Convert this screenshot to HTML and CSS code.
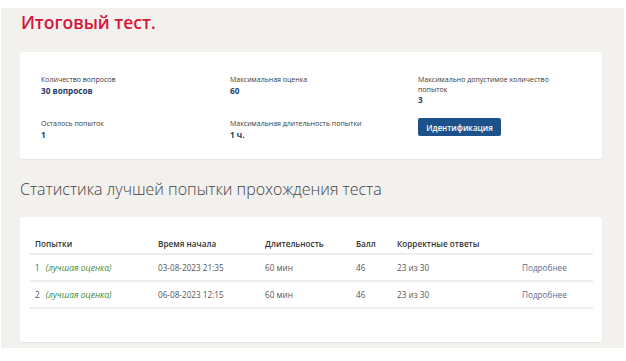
FILE: index.html
```html
<!DOCTYPE html>
<html lang="ru">
<head>
<meta charset="utf-8">
<link rel="stylesheet" href="styles.css">
</head>
<body>
<div class="page">
  <h1 class="title">Итоговый тест.</h1>
  <section class="card info">
    <div class="info-grid">
      <div class="item"><div class="label">Количество вопросов</div><div class="value">30 вопросов</div></div>
      <div class="item"><div class="label">Максимальная оценка</div><div class="value">60</div></div>
      <div class="item"><div class="label">Максимально допустимое количество попыток</div><div class="value">3</div></div>
      <div class="item"><div class="label">Осталось попыток</div><div class="value">1</div></div>
      <div class="item"><div class="label">Максимальная длительность попытки</div><div class="value">1 ч.</div></div>
      <div class="item"><button class="btn">Идентификация</button></div>
    </div>
  </section>
  <h2 class="subtitle">Статистика лучшей попытки прохождения теста</h2>
  <section class="card stats">
    <table class="tbl">
      <thead>
        <tr><th class="c1">Попытки</th><th class="c2">Время начала</th><th class="c3">Длительность</th><th class="c4">Балл</th><th class="c5">Корректные ответы</th><th class="c6"></th></tr>
      </thead>
      <tbody>
        <tr><td class="c1">1 <span class="best">(лучшая оценка)</span></td><td>03-08-2023 21:35</td><td>60 мин</td><td>46</td><td>23 из 30</td><td><a class="more" href="#">Подробнее</a></td></tr>
        <tr><td class="c1">2 <span class="best">(лучшая оценка)</span></td><td>06-08-2023 12:15</td><td>60 мин</td><td>46</td><td>23 из 30</td><td><a class="more" href="#">Подробнее</a></td></tr>
      </tbody>
    </table>
  </section>
</div>
</body>
</html>
```
FILE: styles.css
```css
html, body { margin: 0; padding: 0; background: #fff; }
body { padding: 8px 2px 13px 1px; font-family: "Open Sans", "Noto Sans", sans-serif; color: #333; }
.page {
  background: #f2f1ee;
  height: 340px;
  padding: 0 22px 0 19px;
  box-sizing: border-box;
  overflow: hidden;
}
.title {
  margin: 0;
  height: 44px;
  box-sizing: border-box;
  padding: 3px 0 0 1px;
  font-size: 17.5px;
  font-weight: 600;
  color: #d4163c;
  line-height: 22px;
}
.card {
  background: #fff;
  border-radius: 3px;
  box-shadow: 0 1px 1px rgba(0,0,0,0.05);
}
.info { height: 107px; box-sizing: border-box; padding: 23px 0 0 21px; }
.info-grid {
  display: grid;
  grid-template-columns: 189px 188px 150px;
  grid-template-rows: 44px auto;
}
.label { font-size: 7px; line-height: 9.5px; color: #3a3a3a; }
.value { font-size: 8.2px; line-height: 11px; font-weight: 700; color: #1f3d6b; }
.btn {
  display: block;
  margin-top: -1px;
  background: #1c5289;
  color: #fff;
  border: 0;
  border-radius: 2px;
  font-family: inherit;
  font-size: 8px;
  font-weight: 600;
  height: 18px;
  width: 83px;
  padding: 0;
}
.subtitle {
  margin: 0;
  height: 58px;
  box-sizing: border-box;
  padding-top: 19px;
  font-size: 16px;
  font-weight: 300;
  color: #444;
  line-height: 22px;
}
.stats { height: 125px; box-sizing: border-box; padding: 18px 9px 0 10px; }
.tbl { width: 100%; border-collapse: collapse; font-size: 8.2px; }
.tbl th { text-align: left; font-weight: 600; color: #333; height: 17px; padding: 0 0 1px 5px; vertical-align: middle; border-bottom: 2px solid #eeeeee; }
.tbl td { height: 25px; padding: 0 0 0 5px; border-bottom: 2px solid #eeeeee; color: #555; vertical-align: middle; }
.c1 { width: 118px; }
.c2 { width: 102px; }
.c3 { width: 86px; }
.c4 { width: 36px; }
.c5 { width: 120px; }
.best { color: #3c8a3c; font-style: italic; margin-left: 4px; font-size: 8.6px; }
.more { color: #556c93; text-decoration: none; }
```
